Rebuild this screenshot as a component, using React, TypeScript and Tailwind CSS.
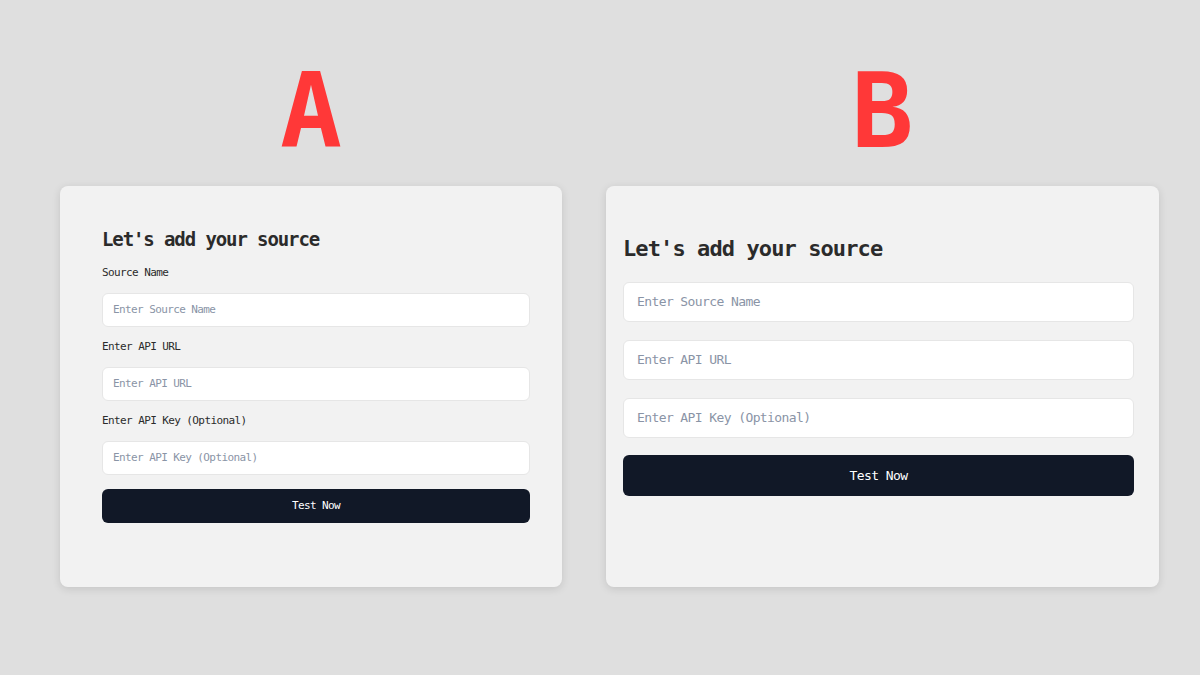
import React from "react";

const mono = { fontFamily: '"DejaVu Sans Mono", "Liberation Mono", monospace' };

function Field({ placeholder, cls, phCls }: { placeholder: string; cls: string; phCls: string }) {
  return (
    <div className={`w-full bg-white border border-[#e6e6e6] rounded-[6px] flex items-center ${cls}`}>
      <span className={`text-[#8a94a6] ${phCls}`}>{placeholder}</span>
    </div>
  );
}

export default function App() {
  return (
    <div className="w-[1200px] h-[675px] bg-[#dfdfdf] flex pl-[60px] pt-[60px] gap-[44px]" style={mono}>
      <div className="w-[502px] flex flex-col items-center">
        <div className="text-[103px] leading-none font-bold text-[#ff3838] h-[103px]">A</div>
        <div className="mt-[23px] w-[502px] h-[401px] bg-[#f2f2f2] rounded-[8px] shadow-[0_2px_8px_rgba(0,0,0,0.12)] pl-[42px] pr-[32px] pt-[40px]">
          <h2 className="text-[19px] font-bold tracking-[-1.1px] text-[#2b2b2b] leading-[26px]">Let's add your source</h2>
          <div className="mt-[14px] text-[11px] tracking-[-0.6px] text-[#2b2b2b] leading-[14px]">Source Name</div>
          <Field placeholder="Enter Source Name" cls="mt-[13px] h-[34px] px-[10px]" phCls="text-[11px] tracking-[-0.6px]" />
          <div className="mt-[13px] text-[11px] tracking-[-0.6px] text-[#2b2b2b] leading-[14px]">Enter API URL</div>
          <Field placeholder="Enter API URL" cls="mt-[13px] h-[34px] px-[10px]" phCls="text-[11px] tracking-[-0.6px]" />
          <div className="mt-[13px] text-[11px] tracking-[-0.6px] text-[#2b2b2b] leading-[14px]">Enter API Key (Optional)</div>
          <Field placeholder="Enter API Key (Optional)" cls="mt-[13px] h-[34px] px-[10px]" phCls="text-[11px] tracking-[-0.6px]" />
          <button className="mt-[14px] w-full h-[34px] bg-[#111827] rounded-[6px] text-white text-[11px] tracking-[-0.6px]">Test Now</button>
        </div>
      </div>
      <div className="w-[553px] flex flex-col items-center">
        <div className="text-[103px] leading-none font-bold text-[#ff3838] h-[103px]">B</div>
        <div className="mt-[23px] w-[553px] h-[401px] bg-[#f2f2f2] rounded-[8px] shadow-[0_2px_8px_rgba(0,0,0,0.12)] pl-[17px] pr-[25px] pt-[48px]">
          <h2 className="text-[22px] font-bold tracking-[-0.9px] text-[#2b2b2b] leading-[30px]">Let's add your source</h2>
          <Field placeholder="Enter Source Name" cls="mt-[18px] h-[40px] px-[13px]" phCls="text-[13px] tracking-[-0.6px]" />
          <Field placeholder="Enter API URL" cls="mt-[18px] h-[40px] px-[13px]" phCls="text-[13px] tracking-[-0.6px]" />
          <Field placeholder="Enter API Key (Optional)" cls="mt-[18px] h-[40px] px-[13px]" phCls="text-[13px] tracking-[-0.6px]" />
          <button className="mt-[17px] w-full h-[41px] bg-[#111827] rounded-[6px] text-white text-[13px] tracking-[-0.6px]">Test Now</button>
        </div>
      </div>
    </div>
  );
}
